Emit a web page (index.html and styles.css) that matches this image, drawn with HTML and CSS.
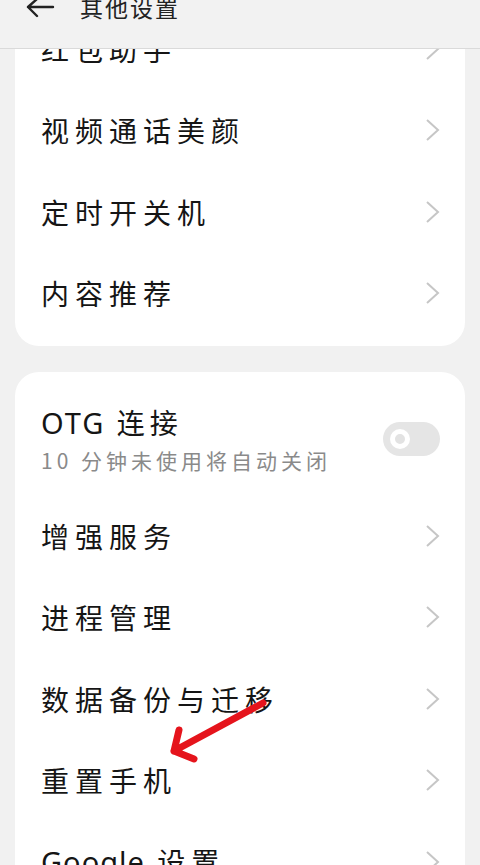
FILE: index.html
```html
<!DOCTYPE html>
<html lang="zh">
<head>
<meta charset="utf-8">
<link rel="stylesheet" href="styles.css">
</head>
<body>
<header class="topbar">
  <svg class="back" width="30" height="22" viewBox="0 0 30 22"><path d="M3 9 H28 M3 9 L12 1 M3 9 L12 18" fill="none" stroke="#222" stroke-width="2.4" stroke-linecap="round" stroke-linejoin="round"/></svg>
  <span class="title">其他设置</span>
</header>
<main class="content">
  <section class="card card-first">
    <div class="row"><span class="label">红包助手</span><svg class="chev" width="14" height="22" viewBox="0 0 14 22"><polyline points="1,1 12,11 1,21" fill="none" stroke="#c6c6c6" stroke-width="2"/></svg></div>
    <div class="row"><span class="label">视频通话美颜</span><svg class="chev" width="14" height="22" viewBox="0 0 14 22"><polyline points="1,1 12,11 1,21" fill="none" stroke="#c6c6c6" stroke-width="2"/></svg></div>
    <div class="row"><span class="label">定时开关机</span><svg class="chev" width="14" height="22" viewBox="0 0 14 22"><polyline points="1,1 12,11 1,21" fill="none" stroke="#c6c6c6" stroke-width="2"/></svg></div>
    <div class="row"><span class="label">内容推荐</span><svg class="chev" width="14" height="22" viewBox="0 0 14 22"><polyline points="1,1 12,11 1,21" fill="none" stroke="#c6c6c6" stroke-width="2"/></svg></div>
  </section>
  <section class="card">
    <div class="row row-otg">
      <div class="otg-text">
        <span class="label otg-label"><span class="latin">OTG</span> 连接</span>
        <span class="sub">10 分钟未使用将自动关闭</span>
      </div>
      <span class="toggle"><span class="knob"></span></span>
    </div>
    <div class="row"><span class="label">增强服务</span><svg class="chev" width="14" height="22" viewBox="0 0 14 22"><polyline points="1,1 12,11 1,21" fill="none" stroke="#c6c6c6" stroke-width="2"/></svg></div>
    <div class="row"><span class="label">进程管理</span><svg class="chev" width="14" height="22" viewBox="0 0 14 22"><polyline points="1,1 12,11 1,21" fill="none" stroke="#c6c6c6" stroke-width="2"/></svg></div>
    <div class="row"><span class="label">数据备份与迁移</span><svg class="chev" width="14" height="22" viewBox="0 0 14 22"><polyline points="1,1 12,11 1,21" fill="none" stroke="#c6c6c6" stroke-width="2"/></svg></div>
    <div class="row"><span class="label">重置手机</span><svg class="chev" width="14" height="22" viewBox="0 0 14 22"><polyline points="1,1 12,11 1,21" fill="none" stroke="#c6c6c6" stroke-width="2"/></svg></div>
    <div class="row"><span class="label"><span class="latin">Google</span> 设置</span><svg class="chev" width="14" height="22" viewBox="0 0 14 22"><polyline points="1,1 12,11 1,21" fill="none" stroke="#c6c6c6" stroke-width="2"/></svg></div>
  </section>
</main>
<svg class="annot" width="480" height="865" viewBox="0 0 480 865"><path d="M263 703 L174 751 M174 751 L179 730 M174 751 L194 759" fill="none" stroke="#e5141c" stroke-width="7" stroke-linecap="round" stroke-linejoin="round"/></svg>
</body>
</html>
```

FILE: styles.css
```css
html, body {
  margin: 0;
  padding: 0;
}
body {
  width: 480px;
  height: 865px;
  overflow: hidden;
  background: #f1f1f1;
  font-family: "Noto Sans CJK SC", "Noto Sans", sans-serif;
  color: #151515;
  position: relative;
}
.topbar {
  position: absolute;
  top: 0;
  left: 0;
  right: 0;
  height: 48px;
  background: #f2f2f2;
  border-bottom: 1px solid #dadada;
  display: flex;
  align-items: flex-start;
  z-index: 2;
}
.back {
  margin: -2px 0 0 25px;
}
.title {
  margin: -10px 0 0 25px;
  font-size: 23px;
  line-height: 34px;
  letter-spacing: 2px;
  color: #222;
}
.content {
  display: flex;
  flex-direction: column;
  gap: 26px;
  padding: 0 15px;
  height: 865px;
  overflow: hidden;
}
.card {
  background: #fff;
  border-radius: 24px;
  padding: 12px 0;
  flex: none;
}
.card-first {
  margin-top: -4px;
}
.row {
  height: 81.5px;
  display: flex;
  align-items: center;
  justify-content: space-between;
  padding: 0 25px 0 26px;
}
.label {
  font-size: 28px;
  letter-spacing: 6px;
  line-height: 40px;
}
.latin {
  font-family: "Noto Sans", "Open Sans", sans-serif;
  letter-spacing: 1px;
  font-size: 29px;
}
.chev {
  flex: none;
}
.row-otg {
  height: 111px;
  align-items: flex-start;
}
.otg-text {
  display: flex;
  flex-direction: column;
  padding-top: 18px;
}
.otg-label {
  letter-spacing: 5px;
}
.otg-label .latin {
  letter-spacing: 2px;
}
.sub {
  font-size: 21px;
  letter-spacing: 4px;
  color: #8a8a8a;
  line-height: 26px;
  margin-top: 4px;
}
.toggle {
  margin-top: 38px;
  width: 57px;
  height: 34px;
  border-radius: 17px;
  background: #e5e5e5;
  display: flex;
  align-items: center;
  padding-left: 7px;
  box-sizing: border-box;
}
.knob {
  width: 20px;
  height: 20px;
  border-radius: 50%;
  box-sizing: border-box;
  border: 5px solid #fff;
  background: #e2e2e2;
}
.annot {
  position: absolute;
  top: 0;
  left: 0;
  z-index: 3;
  pointer-events: none;
}
```
